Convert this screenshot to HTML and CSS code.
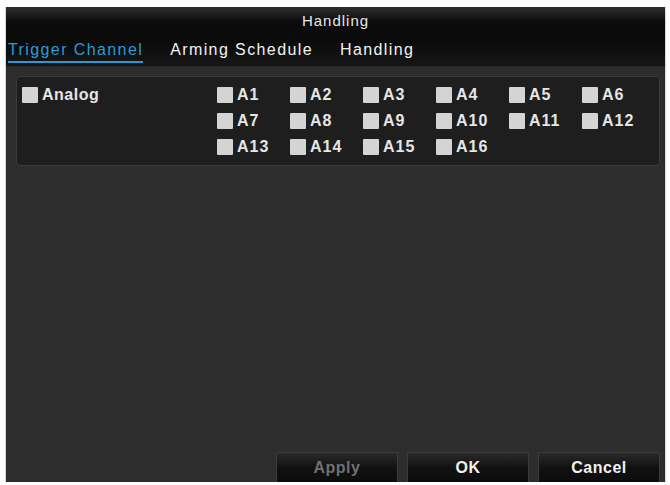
FILE: index.html
```html
<!DOCTYPE html>
<html lang="en">
<head>
    <meta charset="UTF-8">
    <meta name="viewport" content="width=device-width, initial-scale=1.0">
    <title>Handling</title>
    <link rel="stylesheet" href="styles.css">
</head>
<body>
    <div class="dialog">
        <div class="header">
            <div class="title">Handling</div>
            <div class="tabs">
                <span class="tab active">Trigger Channel</span>
                <span class="tab">Arming Schedule</span>
                <span class="tab">Handling</span>
            </div>
        </div>

        <div class="content">
            <div class="panel">
                <label class="check group"><span class="box"></span>Analog</label>
                <div class="channels">
                    <label class="check"><span class="box"></span>A1</label>
                    <label class="check"><span class="box"></span>A2</label>
                    <label class="check"><span class="box"></span>A3</label>
                    <label class="check"><span class="box"></span>A4</label>
                    <label class="check"><span class="box"></span>A5</label>
                    <label class="check"><span class="box"></span>A6</label>
                    <label class="check"><span class="box"></span>A7</label>
                    <label class="check"><span class="box"></span>A8</label>
                    <label class="check"><span class="box"></span>A9</label>
                    <label class="check"><span class="box"></span>A10</label>
                    <label class="check"><span class="box"></span>A11</label>
                    <label class="check"><span class="box"></span>A12</label>
                    <label class="check"><span class="box"></span>A13</label>
                    <label class="check"><span class="box"></span>A14</label>
                    <label class="check"><span class="box"></span>A15</label>
                    <label class="check"><span class="box"></span>A16</label>
                </div>
            </div>

            <div class="buttons">
                <button class="btn disabled">Apply</button>
                <button class="btn">OK</button>
                <button class="btn">Cancel</button>
            </div>
        </div>
    </div>
</body>
</html>
```

FILE: styles.css
```css
body {
    margin: 0;
    background-color: #fff;
    font-family: "Liberation Sans", Arial, sans-serif;
}
.dialog {
    margin: 7px 5px 0 6px;
    width: 659px;
    height: 475px;
    display: flex;
    flex-direction: column;
    background-color: #2d2d2d;
    box-shadow: -1px 0 0 #d8d8d8, 1px 0 0 #d8d8d8;
}
.header {
    height: 59px;
    background: linear-gradient(#303030, #0b0b0b 25%, #0b0b0b 60%, #161616);
    border-bottom: 1px solid #262626;
}
.title {
    color: #e8e8e8;
    font-size: 15px;
    letter-spacing: 1px;
    text-align: center;
    padding-top: 5px;
    height: 29px;
}
.tabs {
    display: flex;
    gap: 27px;
    padding-left: 2px;
}
.tab {
    color: #f2f2f2;
    font-size: 16px;
    letter-spacing: 1.4px;
    padding-bottom: 2px;
}
.tab.active {
    color: #2c9ad6;
    border-bottom: 2px solid #2c9ad6;
}
.content {
    flex: 1;
    display: flex;
    flex-direction: column;
    padding: 9px 5px 0 10px;
}
.panel {
    height: 90px;
    box-sizing: border-box;
    background-color: #1e1e1e;
    border: 1px solid #3a3a3a;
    border-radius: 4px;
    display: flex;
    align-items: flex-start;
    padding: 10px 0 0 5px;
}
.check {
    display: flex;
    align-items: center;
    gap: 4px;
    color: #e6e6e6;
    font-size: 16px;
    font-weight: bold;
    letter-spacing: 1px;
    height: 16px;
}
.group {
    width: 195px;
    letter-spacing: 0.5px;
}
.channels {
    display: grid;
    grid-template-columns: repeat(6, 73px);
    row-gap: 10px;
}
.box {
    width: 16px;
    height: 16px;
    background-color: #d4d4d4;
    border-radius: 1px;
}
.buttons {
    margin-top: auto;
    display: flex;
    justify-content: flex-end;
    gap: 9px;
}
.btn {
    width: 122px;
    height: 30px;
    border: 1px solid #3c3c3c;
    border-bottom: none;
    border-radius: 2px 2px 0 0;
    background: linear-gradient(#2a2a2a, #111 50%, #0c0c0c);
    color: #f0f0f0;
    font-family: "Liberation Sans", Arial, sans-serif;
    font-size: 16px;
    font-weight: bold;
    letter-spacing: 0.5px;
    padding: 0;
}
.btn.disabled {
    color: #707070;
}
```
